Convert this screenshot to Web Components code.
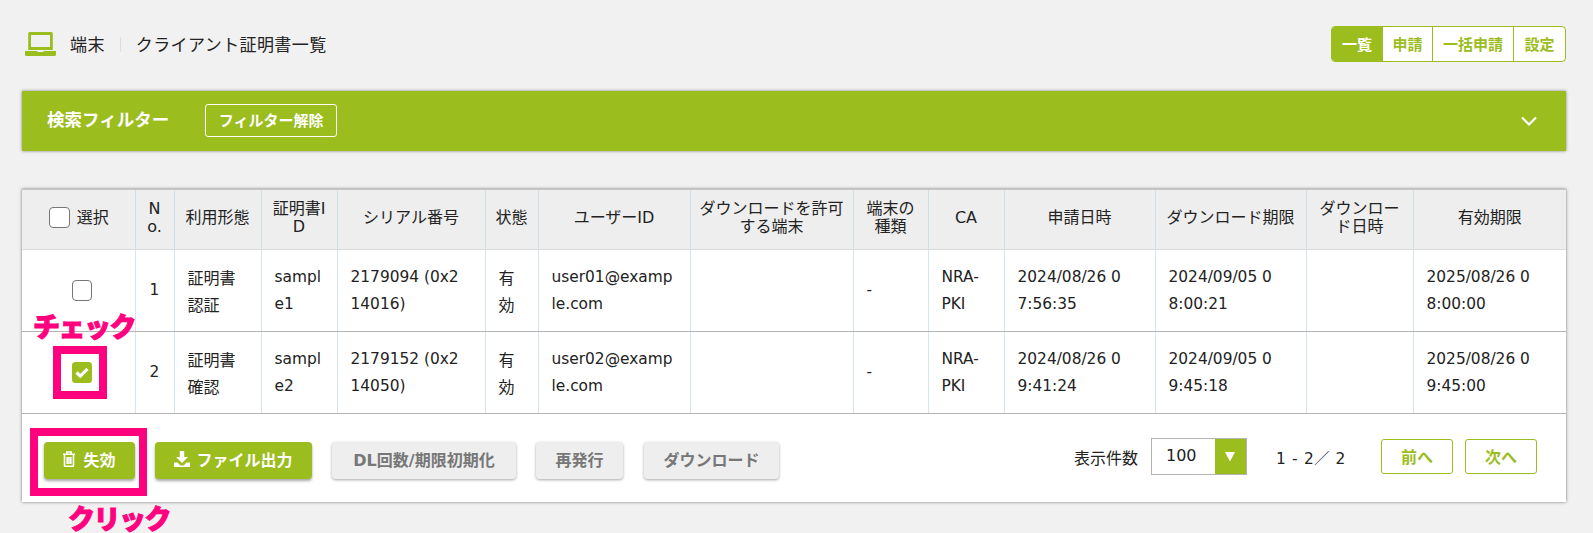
<!DOCTYPE html>
<html lang="ja"><head><meta charset="utf-8"><title>クライアント証明書一覧</title>
<style>
html,body{margin:0;padding:0;background:#f1f1f1;}
body{width:1593px;height:533px;overflow:hidden;position:relative;font-family:"Noto Sans CJK JP","Noto Sans",sans-serif;color:#222;}
</style></head><body>
<page-shell>
  <page-header slot="header"></page-header>
  <filter-bar slot="filter"></filter-bar>
  <result-card slot="card">
    <cert-table></cert-table>
    <action-bar></action-bar>
  </result-card>
</page-shell>
<call-out kind="box" style="left:53px;top:346px;width:54px;height:53px"></call-out>
<call-out kind="box" style="left:30px;top:428px;width:117px;height:68px"></call-out>
<call-out style="left:33px;top:311px">チェック</call-out>
<call-out style="left:68px;top:503px">クリック</call-out>
<script>
const CJK='"Noto Sans CJK JP","Noto Sans",sans-serif';
const MIX='"DejaVu Sans","Noto Sans CJK JP",sans-serif';
function def(name,html,init){
  customElements.define(name,class extends HTMLElement{
    constructor(){super();this.attachShadow({mode:'open'}).innerHTML=html;if(init)init.call(this,this.shadowRoot);}
  });
}
def('page-shell',`<style>:host{display:flex;flex-direction:column;padding:26px 27px 0 22px;width:1544px}
.f{display:block;margin-top:29px}.c{display:block;margin-top:38px}</style>
<slot name="header"></slot><div class="f"><slot name="filter"></slot></div><div class="c"><slot name="card"></slot></div>`);

def('page-header',`<style>
:host{display:flex;align-items:center;justify-content:space-between;height:36px;font-family:${CJK};color:#222}
.l{display:flex;align-items:center;font-size:17px;line-height:36px}
svg{width:31px;height:24px;margin:0 14px 0 3px;display:block}
.sep{width:1px;height:15px;background:#ddd;margin:0 15px 0 15px}
.k{letter-spacing:.4px}
.tabs{display:flex;font-size:15px;font-weight:700;color:#9bbd1e;height:36px;background:#fff;border:1px solid #9bbd1e;border-radius:4px;box-sizing:border-box;overflow:hidden}
.tabs span{display:flex;align-items:center;justify-content:center;border-left:1px solid #9bbd1e;box-sizing:border-box;padding-bottom:2px}
.tabs span:first-child{border-left:0;background:#9bbd1e;color:#fff}
</style>
<div class="l"><svg viewBox="0 0 31 24" fill="#9bbd1e"><path d="M3.2 1.6A1.6 1.6 0 0 1 4.8 0h21.4a1.6 1.6 0 0 1 1.6 1.6V18H3.2zM6 3v12h19V3z" fill-rule="evenodd"/><path d="M0 19h12l1 1.1h5l1-1.1h12v3.3a1.6 1.6 0 0 1-1.6 1.7H1.6A1.6 1.6 0 0 1 0 22.3z"/></svg>
<span class="k">端末</span><span class="sep"></span><span class="k">クライアント証明書一覧</span></div>
<div class="tabs"><span style="width:50px">一覧</span><span style="width:50px">申請</span><span style="width:81px">一括申請</span><span style="width:52px">設定</span></div>`);

def('filter-bar',`<style>
:host{display:flex;align-items:center;height:60px;background:#9bbd1e;color:#fff;box-shadow:0 0 3px rgba(0,0,0,.45);font-family:${CJK};font-weight:700;padding:0 29px 0 25px;box-sizing:border-box}
.t{font-size:17.5px;margin-top:-6px}
.b{margin-left:36px;width:132px;height:33px;box-sizing:border-box;border:1px solid #fff;border-radius:3px;font-size:15px;display:flex;align-items:center;justify-content:center;margin-top:-1px;padding-bottom:2px}
svg{margin-left:auto;width:16px;height:10px;display:block;margin-top:-1px}
</style><span class="t">検索フィルター</span><span class="b">フィルター解除</span>
<svg viewBox="0 0 16 10" fill="none" stroke="#fff" stroke-width="2.2"><path d="M1 1.5l7 7 7-7"/></svg>`);

def('result-card',`<style>:host{display:block;background:#fff;box-shadow:0 0 3px rgba(0,0,0,.5);height:313px}</style><slot></slot>`);

const chk=(on)=>on?`<svg class="cb" viewBox="0 0 20 21"><rect width="20" height="21" rx="3.5" fill="#9bbd1e"/><path d="M4.5 10.5l3.8 3.6 7.2-7.2" fill="none" stroke="#fff" stroke-width="3.2"/></svg>`:`<span class="cb off"></span>`;
const rows=[
 ['1','証明書<br>認証','sampl<br>e1','2179094 (0x2<br>14016)','有<br>効','user01@examp<br>le.com','','-','NRA-<br>PKI','2024/08/26 0<br>7:56:35','2024/09/05 0<br>8:00:21','','2025/08/26 0<br>8:00:00'],
 ['2','証明書<br>確認','sampl<br>e2','2179152 (0x2<br>14050)','有<br>効','user02@examp<br>le.com','','-','NRA-<br>PKI','2024/08/26 0<br>9:41:24','2024/09/05 0<br>9:45:18','','2025/08/26 0<br>9:45:00']];
const heads=['N<br>o.','利用形態','証明書I<br>D','シリアル番号','状態','ユーザーID','ダウンロードを許可<br>する端末','端末の<br>種類','CA','申請日時','ダウンロード期限','ダウンロー<br>ド日時','有効期限'];
const widths=[113,39,87,76,148,53,152,163,75,76,151,151,107,153];
def('cert-table',`<style>
:host{display:block;font-family:${CJK};font-size:16px;color:#222}
table{border-collapse:collapse;table-layout:fixed;width:1544px}
th{background:#eee;font-family:${MIX};font-weight:400;height:60px;padding:0 0 4px;line-height:18px;text-align:center;white-space:nowrap;border-left:1px solid #cfdfe8;border-top:1px solid #c4c4c4;border-bottom:1px solid #ddd;box-sizing:border-box}
td{height:82px;padding:0 0 0 13px;line-height:27px;white-space:nowrap;border-left:1px solid #d6e5ee;border-bottom:1px solid #b4b4b4;box-sizing:border-box}
th:first-child,td:first-child{border-left:0}
td.n{padding:0;text-align:center}
td.c{padding:0 0 0 7px}
td.lat{font-family:"DejaVu Sans",sans-serif;font-size:15.4px;color:#222}
.sel{display:flex;align-items:center;justify-content:center;gap:7px;padding-left:1px}
.cb{width:20px;height:21px;display:block;box-sizing:border-box}
.cb.off{border:1px solid #777;border-radius:4px;background:#fff}
.h .cb{width:21px}
td .cb{margin:0 auto}
</style>
<table><colgroup>${widths.map(w=>`<col style="width:${w}px">`).join('')}</colgroup>
<thead><tr class="h"><th><div class="sel">${chk(false)}<span>選択</span></div></th>${heads.map(h=>`<th>${h}</th>`).join('')}</tr></thead>
<tbody>${rows.map((r,i)=>`<tr><td class="c">${chk(i==1)}</td>${r.map((c,j)=>{
  const lat=[2,3,5,7,8,9,10,12].includes(j);
  return `<td class="${j==0?'n lat':lat?'lat':''}">${c}</td>`}).join('')}</tr>`).join('')}</tbody></table>`);

def('action-btn',`<style>
:host{display:inline-flex;align-items:center;justify-content:center;gap:6px;height:37px;box-sizing:border-box;padding-bottom:3px;border-radius:4px;background:#9bbd1e;color:#fff;font-weight:700;font-size:16px;box-shadow:0 2px 3px rgba(0,0,0,.35);font-family:${MIX}}
:host([off]){background:#eee;color:#777;box-shadow:0 1px 3px rgba(0,0,0,.35)}
</style><slot name="i"></slot><slot></slot>`);

def('action-bar',`<style>
:host{display:flex;align-items:flex-start;height:89px;box-sizing:border-box;padding:28px 29px 0 22px;font-family:${CJK};color:#222;font-size:16px}
.btns{display:flex;gap:20px;}
.btns svg{display:block}
.pg{margin-left:auto;display:flex;align-items:center;height:37px;margin-top:-4px}
.sel{display:flex;width:96px;height:37px;box-sizing:border-box;border:1px solid #b4b4b4;margin-left:13px;background:#fff}
.sel b{flex:1;font-weight:400;padding-left:14px;line-height:34px;font-family:"DejaVu Sans",sans-serif;font-size:16px}
.sel i{width:31px;background:#9bbd1e;display:flex;align-items:center;justify-content:center;border:0}
.cnt{margin-left:29px;width:105px;font-family:${MIX};font-size:15.4px;word-spacing:1px;letter-spacing:.2px;white-space:nowrap}
.o{width:72px;height:35px;box-sizing:border-box;border:1px solid #9bbd1e;border-radius:3px;color:#9bbd1e;font-weight:700;font-size:16px;display:flex;align-items:center;justify-content:center;background:#fff;padding-bottom:2px}
.o+.o{margin-left:12px}
</style>
<div class="btns">
<action-btn style="width:91px;gap:8px"><svg slot="i" width="12" height="16" viewBox="0 0 12 16" fill="none" stroke="#fff" stroke-width="1.6"><path d="M0 3.2h12M3.8 3V1h4.4v2M1.5 3.5v11a.8.8 0 0 0 .8.8h7.4a.8.8 0 0 0 .8-.8v-11M4.2 6v7M6 6v7M7.8 6v7"/></svg>失効</action-btn>
<action-btn style="width:157px"><svg slot="i" width="16" height="16" viewBox="0 0 16 16" fill="#fff"><path d="M5.8 0h4.4v6H14L8 12 2 6h3.8zM0 11.5h3.5L6.5 14.5h3l3-3H16V16H0z"/></svg>ファイル出力</action-btn>
<action-btn off style="width:184px">DL回数/期限初期化</action-btn>
<action-btn off style="width:87px">再発行</action-btn>
<action-btn off style="width:135px;margin-left:1px">ダウンロード</action-btn>
</div>
<div class="pg"><span>表示件数</span>
<div class="sel"><b>100</b><i><svg width="11" height="10" viewBox="0 0 11 10"><path d="M0 0h10L5 9.5z" fill="#fff"/></svg></i></div>
<span class="cnt">1 - 2／ 2</span>
<span class="o">前へ</span><span class="o">次へ</span></div>`);

def('call-out',`<style>
:host{position:absolute;font-family:${CJK};font-weight:900;font-size:27px;line-height:30px;color:#ff007f;white-space:nowrap;letter-spacing:-1.5px;-webkit-text-stroke:1px #ff007f}
:host([kind=box]){box-sizing:border-box;border:8px solid #ff007f}
</style><slot></slot>`);
</script>
</body></html>
